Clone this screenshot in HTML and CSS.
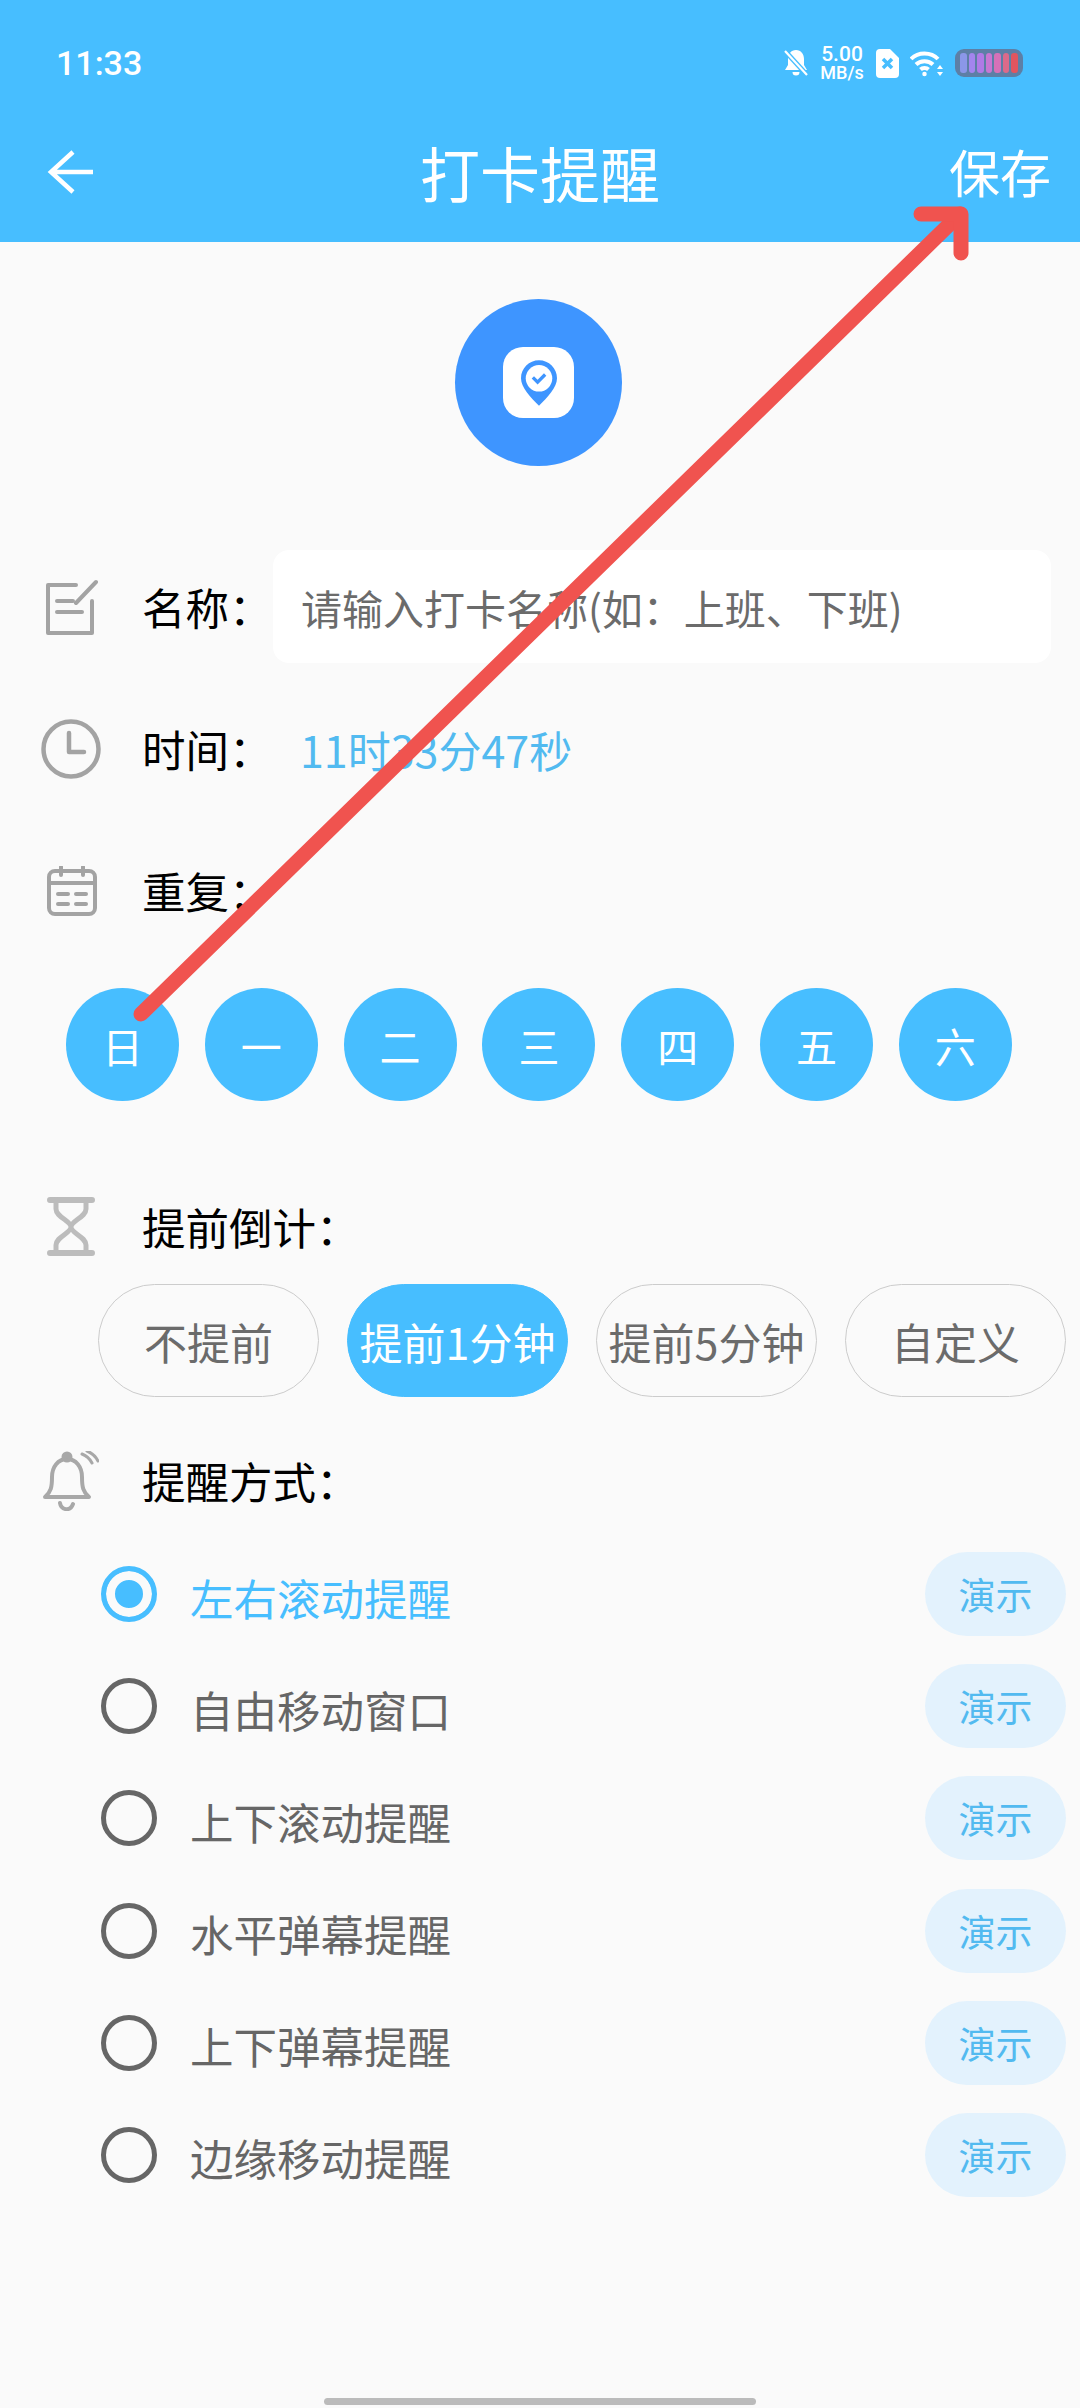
FILE: index.html
```html
<!DOCTYPE html>
<html lang="zh-CN">
  <head>
    <meta charset="UTF-8" />
    <meta name="viewport" content="width=device-width, initial-scale=1" />
    <title>打卡提醒</title>
    <link rel="stylesheet" href="styles.css">
  </head>
  <body>
    <div class="page">
      <header class="header">
        <div class="statusbar">
          <span class="clock">11:33</span>
          <div class="status-icons">
            <svg class="ic-mute" width="24" height="26" viewBox="0 0 24 26">
              <path d="M12 0c-5 0-8 4-8 9v6l-3 5h22l-3-5V9c0-5-3-9-8-9zM8.500 22a3.500 3.500 0 0 0 7 0z" fill="#fff"/>
              <path d="M1 1l22 24" stroke="#47beff" stroke-width="5"/>
              <path d="M1 1l22 24" stroke="#fff" stroke-width="2.200"/>
            </svg>
            <div class="speed"><span>5.00</span><span class="speed-unit">MB/s</span></div>
            <svg width="23" height="29" viewBox="0 0 23 29">
              <path d="M4 0h10l9 9v16a4 4 0 0 1-4 4H4a4 4 0 0 1-4-4V4a4 4 0 0 1 4-4z" fill="#fff"/>
              <path d="M7 10l9 9m0-9l-9 9" stroke="#47beff" stroke-width="3.500"/>
            </svg>
            <svg width="34" height="27" viewBox="0 0 34 27" fill="none" stroke="#fff" stroke-width="4">
              <path d="M1 9c7-7.500 20-7.500 27 0"/>
              <path d="M6 14.500c4.500-4.500 12.500-4.500 17 0"/>
              <path d="M10.500 19.500c2-2 6-2 8 0"/>
              <circle cx="14.500" cy="24" r="1.500" fill="#fff" stroke-width="1.500"/>
              <path d="M30 15l-3 4h6zM30 26l-3-4h6z" fill="#fff" stroke="none"/>
            </svg>
            <div class="battery">
              <i style="background:#8b97e8"></i>
              <i style="background:#a385ee"></i>
              <i style="background:#b07ae6"></i>
              <i style="background:#c877d2"></i>
              <i style="background:#d671b8"></i>
              <i style="background:#dc6a8a"></i>
              <i style="background:#e2555f"></i>
            </div>
          </div>
        </div>
        <div class="toolbar">
          <svg class="back" width="48" height="44" viewBox="0 0 48 44" fill="none" stroke="#fff" stroke-width="4.500">
            <path d="M46 22H4M26 2L4 22l22 20"/>
          </svg>
          <h1 class="title">打卡提醒</h1>
          <span class="save">保存</span>
        </div>
      </header>

      <div class="logo">
        <div class="logo-box">
          <svg width="36" height="46" viewBox="0 0 38 48">
            <path d="M19 0C8.500 0 0 8.500 0 19c0 10 10 20 19 29 9-9 19-19 19-29C38 8.500 29.500 0 19 0z" fill="#3e95ff"/>
            <circle cx="19" cy="19" r="14" fill="#fff"/>
            <path d="M12.500 18l5 5 8-8" fill="none" stroke="#3e95ff" stroke-width="3.500"/>
          </svg>
        </div>
      </div>

      <div class="row row-name">
        <svg class="row-icon" width="52" height="56" viewBox="0 0 52 56" fill="none" stroke="#a3a3a3" stroke-width="4" stroke-linecap="round" stroke-linejoin="round">
          <path d="M30 6H2v48h44V22"/>
          <path d="M30 24L50 3"/>
          <path d="M11 22h16M11 33h25"/>
        </svg>
        <span class="label">名称<span class="colon">：</span></span>
        <div class="input">请输入打卡名称(如：上班、下班)</div>
      </div>

      <div class="row row-time">
        <svg class="row-icon" width="60" height="60" viewBox="0 0 60 60" fill="none" stroke="#a3a3a3" stroke-width="4.500" stroke-linecap="round" stroke-linejoin="round">
          <circle cx="30" cy="30" r="27.500"/>
          <path d="M28 14v19h15"/>
        </svg>
        <span class="label">时间<span class="colon">：</span></span>
        <span class="time-value">11时33分47秒</span>
      </div>

      <div class="row row-repeat">
        <svg class="row-icon" width="50" height="50" viewBox="0 0 50 50" fill="none" stroke="#a3a3a3" stroke-width="4" stroke-linecap="round" stroke-linejoin="round">
          <rect x="2" y="5" width="46" height="43" rx="6"/>
          <path d="M2 17h46M14 1v8M36 1v8"/>
          <path d="M11 28h10M29 28h10M11 38h10M29 38h10"/>
        </svg>
        <span class="label">重复<span class="colon">：</span></span>
      </div>

      <div class="days">
        <span class="day">日</span>
        <span class="day">一</span>
        <span class="day">二</span>
        <span class="day">三</span>
        <span class="day">四</span>
        <span class="day">五</span>
        <span class="day">六</span>
      </div>

      <div class="row row-ahead">
        <svg class="row-icon" width="48" height="60" viewBox="0 0 48 60" fill="none" stroke="#bcbcbc" stroke-width="5" stroke-linecap="round" stroke-linejoin="round">
          <path d="M3 3h42M3 56h42" stroke-width="6"/>
          <path d="M9 3v9c0 8 15 12 15 18S9 40 9 48v8M39 3v9c0 8-15 12-15 18s15 10 15 18v8"/>
        </svg>
        <span class="label">提前倒计<span class="colon">：</span></span>
      </div>

      <div class="pills">
        <span class="pill">不提前</span>
        <span class="pill pill-on">提前1分钟</span>
        <span class="pill">提前5分钟</span>
        <span class="pill">自定义</span>
      </div>

      <div class="row row-way">
        <svg class="row-icon" width="56" height="60" viewBox="0 0 56 60" fill="none" stroke="#a8a8a8" stroke-width="4" stroke-linecap="round" stroke-linejoin="round">
          <path d="M2 46c6-5 7-10 7-20 0-10 6-18 15-18s15 8 15 18c0 10 1 15 7 20z"/>
          <circle cx="24" cy="6" r="3.500" fill="#a8a8a8"/>
          <path d="M17 52c1 7 10 9 13 1"/>
          <path d="M39 3c5 2 8 5 10 9M44 0c5 2 9 6 11 10" stroke-width="3"/>
        </svg>
        <span class="label">提醒方式<span class="colon">：</span></span>
      </div>

      <div class="ways">
        <div class="way way-on">
          <span class="radio"></span>
          <span class="way-name">左右滚动提醒</span>
          <span class="demo">演示</span>
        </div>
        <div class="way">
          <span class="radio"></span>
          <span class="way-name">自由移动窗口</span>
          <span class="demo">演示</span>
        </div>
        <div class="way">
          <span class="radio"></span>
          <span class="way-name">上下滚动提醒</span>
          <span class="demo">演示</span>
        </div>
        <div class="way">
          <span class="radio"></span>
          <span class="way-name">水平弹幕提醒</span>
          <span class="demo">演示</span>
        </div>
        <div class="way">
          <span class="radio"></span>
          <span class="way-name">上下弹幕提醒</span>
          <span class="demo">演示</span>
        </div>
        <div class="way">
          <span class="radio"></span>
          <span class="way-name">边缘移动提醒</span>
          <span class="demo">演示</span>
        </div>
      </div>

      <div class="home-bar"></div>

      <!-- red arrow drawn over the screenshot -->
      <svg class="arrow" width="1080" height="2408" viewBox="0 0 1080 2408" fill="none" stroke="#f0534f" stroke-width="15" stroke-linecap="round" stroke-linejoin="round">
        <path d="M141 1014L960 214"/>
        <path d="M921 214h40v39"/>
      </svg>
    </div>
  </body>
</html>
```

FILE: styles.css
```css
* {
  box-sizing: border-box;
}

body {
  margin: 0;
  background: #fafafa;
  font-family: "Noto Sans CJK SC", "Noto Sans", sans-serif;
  color: #000;
}

.page {
  position: relative;
  width: 1080px;
  height: 2408px;
  overflow: hidden;
}

/* 顶部 */
.header {
  height: 242px;
  background: #47beff;
  color: #fff;
}

.statusbar {
  height: 126px;
  display: flex;
  align-items: center;
  justify-content: space-between;
  padding: 0 57px 0 56px;
}

.clock {
  font-family: Roboto, sans-serif;
  font-size: 34px;
  font-weight: 500;
}

.status-icons {
  display: flex;
  align-items: center;
  gap: 11px;
}

.speed {
  display: flex;
  flex-direction: column;
  align-items: center;
  font-family: Roboto, sans-serif;
  font-size: 21px;
  font-weight: 500;
  line-height: 20px;
  width: 46px;
}

.speed-unit {
  font-size: 18px;
  line-height: 18px;
}

.battery {
  display: flex;
  gap: 2px;
  width: 68px;
  height: 28px;
  padding: 4px 5px;
  background: #5d7fa6;
  border-radius: 9px;
}

.battery i {
  flex: 1;
  border-radius: 3px;
}

.toolbar {
  position: relative;
  height: 116px;
  display: flex;
  align-items: center;
  justify-content: center;
  padding-bottom: 25px;
}

.back {
  position: absolute;
  left: 47px;
  top: 24px;
}

.title {
  margin: 0;
  font-size: 60px;
  font-weight: 400;
  line-height: 72px;
}

.save {
  position: absolute;
  right: 29px;
  top: 9px;
  font-size: 51px;
  line-height: 72px;
}

/* 图标 */
.logo {
  margin: 57px 0 0 455px;
  width: 167px;
  height: 167px;
  border-radius: 50%;
  background: #3e95ff;
  display: flex;
  align-items: center;
  justify-content: center;
}

.logo-box {
  width: 71px;
  height: 71px;
  border-radius: 20px;
  background: #fff;
  display: flex;
  align-items: center;
  justify-content: center;
}

/* 表单行 */
.row {
  display: flex;
  align-items: center;
  position: relative;
  padding-left: 142px;
}

.row-icon {
  position: absolute;
  top: 50%;
  transform: translateY(-50%);
}

.label {
  font-size: 43.500px;
  line-height: 60px;
  flex: none;
}

.colon {
  font-family: "Noto Sans CJK TC", sans-serif;
}

.row-name {
  margin-top: 84px;
  height: 113px;
}

.row-name .row-icon {
  left: 46px;
}

.input {
  position: absolute;
  left: 273px;
  top: 0;
  width: 778px;
  height: 113px;
  padding-left: 28px;
  display: flex;
  align-items: center;
  background: #fff;
  border-radius: 16px;
  color: #6b6b6b;
  font-size: 41px;
}

.row-time {
  margin-top: 56px;
  height: 60px;
}

.row-time .row-icon {
  left: 41px;
}

.time-value {
  position: absolute;
  left: 300px;
  color: #52baf0;
  font-size: 43px;
}

.row-repeat {
  margin-top: 82px;
  height: 60px;
}

.row-repeat .row-icon {
  left: 47px;
}

.days {
  display: flex;
  gap: 25.800px;
  margin-top: 67px;
  padding-left: 66px;
}

.day {
  width: 113px;
  height: 113px;
  border-radius: 50%;
  background: #47beff;
  color: #fff;
  font-size: 41px;
  display: flex;
  align-items: center;
  justify-content: center;
}

.row-ahead {
  margin-top: 96px;
  height: 60px;
}

.row-ahead .row-icon {
  left: 47px;
}

.pills {
  display: flex;
  gap: 28px;
  margin-top: 27px;
  padding-left: 98px;
}

.pill {
  width: 221px;
  height: 113px;
  border: 1px solid #ccc;
  border-radius: 57px;
  color: #6b6b6b;
  font-size: 43px;
  display: flex;
  align-items: center;
  justify-content: center;
  white-space: nowrap;
}

.pill-on {
  background: #47beff;
  border-color: #47beff;
  color: #fff;
}

.row-way {
  margin-top: 54px;
  height: 60px;
}

.row-way .row-icon {
  left: 43px;
}

/* 提醒方式 */
.ways {
  margin-top: 41px;
  padding: 0 14px 0 101px;
}

.way {
  display: flex;
  align-items: center;
  height: 84px;
  margin-bottom: 28.200px;
}

.radio {
  width: 56px;
  height: 56px;
  border: 5px solid #666;
  border-radius: 50%;
  flex: none;
}

.way-name {
  margin-left: 33px;
  flex: 1;
  color: #666;
  font-size: 43.500px;
  padding-top: 6px;
}

.demo {
  width: 141px;
  height: 84px;
  border-radius: 42px;
  background: #e3f2fd;
  color: #52baf0;
  font-size: 37px;
  display: flex;
  align-items: center;
  justify-content: center;
}

.way-on .radio {
  border-color: #47beff;
  background: #47beff;
  box-shadow: inset 0 0 0 9px #fafafa;
}

.way-on .way-name {
  color: #47beff;
}

.home-bar {
  position: absolute;
  left: 324px;
  bottom: 3px;
  width: 432px;
  height: 7px;
  border-radius: 4px;
  background: #bbb;
}

.arrow {
  position: absolute;
  left: 0;
  top: 0;
  pointer-events: none;
}
```
